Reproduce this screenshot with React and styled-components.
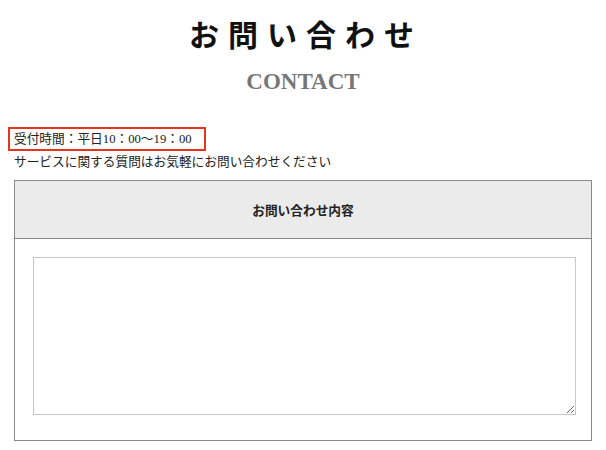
import React from "react";
import styled, { createGlobalStyle } from "styled-components";

const GlobalStyle = createGlobalStyle`
  html, body {
    margin: 0;
    padding: 0;
    background: #fff;
  }
  body {
    font-family: "Liberation Serif", "Noto Sans CJK JP", serif;
    color: #222;
  }
`;

const Page = styled.div`
  padding: 16px 14px 0;
`;

const Title = styled.h1`
  margin: 0;
  text-align: center;
  font-size: 30px;
  line-height: 40px;
  font-weight: 700;
  letter-spacing: 9px;
  padding-left: 6px;
  color: #111;
`;

const SubTitle = styled.p`
  margin: 11px 0 0;
  text-align: center;
  font-size: 23px;
  line-height: 30px;
  font-weight: 700;
  color: #777;
`;

const Hours = styled.div`
  display: inline-block;
  margin: 30px 0 0 -6px;
  padding: 0 12px 0 4px;
  border: 2px solid #e5361d;
  font-size: 12.7px;
  line-height: 20px;
`;

const Note = styled.p`
  margin: 0;
  font-size: 12.7px;
  line-height: 22px;
`;

const Table = styled.div`
  margin-top: 7px;
  border: 1px solid #8a8a8a;
`;

const HeadCell = styled.div`
  height: 57px;
  display: flex;
  align-items: center;
  justify-content: center;
  background: #ebebeb;
  border-bottom: 1px solid #8a8a8a;
  font-size: 12.7px;
  font-weight: 700;
`;

const BodyCell = styled.div`
  padding: 18px 15px 25px 18px;
`;

const TextArea = styled.textarea`
  display: block;
  box-sizing: border-box;
  width: 100%;
  height: 158px;
  border: 1px solid #c8c8c8;
  padding: 4px;
  font-family: inherit;
  font-size: 13px;
  outline: none;
`;

export default function App() {
  return (
    <>
      <GlobalStyle />
      <Page>
        <Title>お問い合わせ</Title>
        <SubTitle>CONTACT</SubTitle>
        <Hours>受付時間：平日10：00〜19：00</Hours>
        <Note>サービスに関する質問はお気軽にお問い合わせください</Note>
        <Table>
          <HeadCell>お問い合わせ内容</HeadCell>
          <BodyCell>
            <TextArea />
          </BodyCell>
        </Table>
      </Page>
    </>
  );
}
